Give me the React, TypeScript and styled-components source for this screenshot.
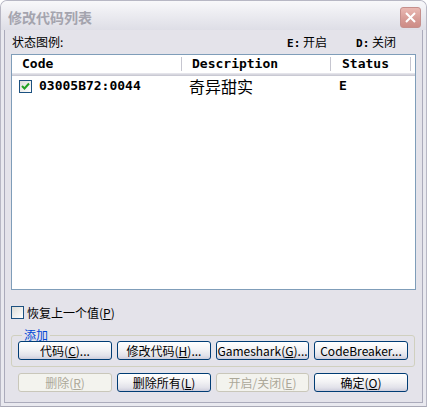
import React from "react";
import styled, { createGlobalStyle } from "styled-components";

const GlobalStyle = createGlobalStyle`
  html, body {
    margin: 0;
    padding: 0;
    background: #ffffff;
  }
  body {
    font-family: "Noto Sans CJK SC", "Liberation Sans", sans-serif;
    font-size: 12px;
    color: #000;
  }
`;

const Window = styled.div`
  width: 427px;
  height: 407px;
  box-sizing: border-box;
  border: 1px solid #b7b7c4;
  border-bottom-color: #a9a9b6;
  border-radius: 7px 7px 0 0;
  background: #e9e9ef;
  display: flex;
  flex-direction: column;
  overflow: hidden;
`;

const TitleBar = styled.div`
  height: 29px;
  flex: none;
  display: flex;
  align-items: center;
  justify-content: space-between;
  padding: 0 5px 0 7px;
  background: linear-gradient(#f8f8fa, #ececf1 45%, #dedee6);
`;

const Title = styled.span`
  font-weight: bold;
  font-size: 14px;
  line-height: 16px;
  color: #a4a4ae;
  margin-top: 3px;
`;

const CloseButton = styled.div`
  width: 21px;
  height: 21px;
  box-sizing: border-box;
  border: 1px solid #c58f8c;
  border-radius: 3px;
  background: linear-gradient(#eab9b3, #d69a94 60%, #cd8c86);
  display: flex;
  align-items: center;
  justify-content: center;
  margin-top: 4px;
`;

const Body = styled.div`
  flex: 1;
  margin: 0 3px 3px;
  border: 1px solid #ababbb;
  border-top: none;
  background: #e4e3ea;
  padding: 1px 6px 8px;
  display: flex;
  flex-direction: column;
`;

const LegendRow = styled.div`
  height: 20px;
  display: flex;
  align-items: center;
  padding-left: 1px;
  padding-right: 20px;
`;

const Spacer = styled.div`
  flex: 1;
`;

const LegendItem = styled.span<{ $gap?: number }>`
  margin-left: ${(p) => p.$gap ?? 0}px;
  white-space: pre;
`;

const Key = styled.span`
  font-family: "DejaVu Sans Mono", "Liberation Mono", monospace;
  font-weight: bold;
  font-size: 11px;
`;

const ListBox = styled.div`
  margin-top: 3px;
  height: 236px;
  box-sizing: border-box;
  border: 1px solid #7f9db9;
  background: #ffffff;
`;

const HeaderRow = styled.div`
  height: 21px;
  box-sizing: border-box;
  display: flex;
  align-items: center;
  padding-bottom: 3px;
  background: linear-gradient(
    to bottom,
    #ffffff 0 18px,
    #e4e4ea 18px 19px,
    #d7d7df 19px 20px,
    #c9c9d3 20px
  );
`;

const Cell = styled.div<{ $w: number; $pl: number }>`
  width: ${(p) => p.$w}px;
  flex: none;
  box-sizing: border-box;
  padding-left: ${(p) => p.$pl}px;
  display: flex;
  align-items: center;
  white-space: nowrap;
`;

const Divider = styled.div`
  width: 1px;
  height: 14px;
  flex: none;
  background: #c6c6d0;
  border-right: 1px solid #ffffff;
`;

const MonoText = styled.span<{ $ml?: number }>`
  font-family: "DejaVu Sans Mono", "Liberation Mono", monospace;
  font-weight: bold;
  font-size: 13px;
  line-height: 16px;
  margin-left: ${(p) => p.$ml ?? 0}px;
`;

const Row = styled.div`
  height: 18px;
  display: flex;
  align-items: center;
  margin-top: 1px;
`;

const DescText = styled.span`
  font-size: 16px;
  line-height: 18px;
`;

const CheckBox = styled.div`
  width: 13px;
  height: 13px;
  flex: none;
  box-sizing: border-box;
  border: 1px solid #1c5180;
  background: linear-gradient(135deg, #dcdcd7, #ffffff);
  display: flex;
  align-items: center;
  justify-content: center;
`;

const RestoreRow = styled.label`
  margin-top: 15px;
  display: flex;
  align-items: center;
  gap: 3px;
  height: 14px;
`;

const Group = styled.fieldset`
  margin: 10px 0 0;
  padding: 0 6px 6px 6px;
  border: 1px solid #d0d0bf;
  border-radius: 3px;
  width: 404px;
  box-sizing: border-box;
  min-width: 0;
`;

const GroupLabel = styled.legend`
  color: #0046d5;
  font-size: 12px;
  line-height: 12px;
  padding: 0 2px;
  margin-left: 4px;
`;

const ButtonRow = styled.div<{ $mt?: number }>`
  display: grid;
  grid-template-columns: 94px 94px 93px 94px;
  column-gap: 5px;
  margin-top: ${(p) => p.$mt ?? 0}px;
  padding-left: ${(p) => (p.$mt ? 7 : 0)}px;
`;

const Button = styled.button`
  height: 19px;
  box-sizing: border-box;
  padding: 0;
  border: 1px solid #003c74;
  border-radius: 3px;
  background: linear-gradient(#ffffff, #f3f3f5 45%, #e2e2ea 80%, #cdcddb);
  font-family: "Noto Sans CJK SC", "Liberation Sans", sans-serif;
  font-size: 12px;
  line-height: 15px;
  color: #000;
  white-space: nowrap;

  &:disabled {
    border-color: #c9c7ba;
    background: #f3f3ee;
    color: #aca899;
  }
`;

const Check = () => (
  <svg width="9" height="9" viewBox="0 0 9 9">
    <path d="M1 4 L3.5 6.5 L8 1.5" fill="none" stroke="#21a121" strokeWidth="2" />
  </svg>
);

const columns = [
  { w: 169, pl: 10, title: "Code" },
  { w: 147, pl: 9, title: "Description" },
  { w: 78, pl: 10, title: "Status" },
];

export default function App() {
  return (
    <>
      <GlobalStyle />
      <Window>
        <TitleBar>
          <Title>修改代码列表</Title>
          <CloseButton>
            <svg width="11" height="11" viewBox="0 0 11 11">
              <path d="M1 1 L10 10 M10 1 L1 10" stroke="#ffffff" strokeWidth="2" />
            </svg>
          </CloseButton>
        </TitleBar>
        <Body>
          <LegendRow>
            <span>状态图例:</span>
            <Spacer />
            <LegendItem>
              <Key>E:</Key> 开启
            </LegendItem>
            <LegendItem $gap={29}>
              <Key>D:</Key> 关闭
            </LegendItem>
          </LegendRow>

          <ListBox>
            <HeaderRow>
              {columns.map((c) => (
                <React.Fragment key={c.title}>
                  <Cell $w={c.w} $pl={c.pl}>
                    <MonoText>{c.title}</MonoText>
                  </Cell>
                  <Divider />
                </React.Fragment>
              ))}
            </HeaderRow>
            <Row>
              <Cell $w={171} $pl={7}>
                <CheckBox>
                  <Check />
                </CheckBox>
                <MonoText $ml={7}>03005B72:0044</MonoText>
              </Cell>
              <Cell $w={149} $pl={6}>
                <DescText>奇异甜实</DescText>
              </Cell>
              <Cell $w={80} $pl={7}>
                <MonoText>E</MonoText>
              </Cell>
            </Row>
          </ListBox>

          <RestoreRow>
            <CheckBox />
            <span>
              恢复上一个值(<u>P</u>)
            </span>
          </RestoreRow>

          <Group>
            <GroupLabel>添加</GroupLabel>
            <ButtonRow>
              <Button>
                代码(<u>C</u>)...
              </Button>
              <Button>
                修改代码(<u>H</u>)...
              </Button>
              <Button>
                Gameshark(<u>G</u>)...
              </Button>
              <Button>CodeBreaker...</Button>
            </ButtonRow>
          </Group>

          <ButtonRow $mt={6}>
            <Button disabled>
              删除(<u>R</u>)
            </Button>
            <Button>
              删除所有(<u>L</u>)
            </Button>
            <Button disabled>
              开启/关闭(<u>E</u>)
            </Button>
            <Button>
              确定(<u>O</u>)
            </Button>
          </ButtonRow>
        </Body>
      </Window>
    </>
  );
}
